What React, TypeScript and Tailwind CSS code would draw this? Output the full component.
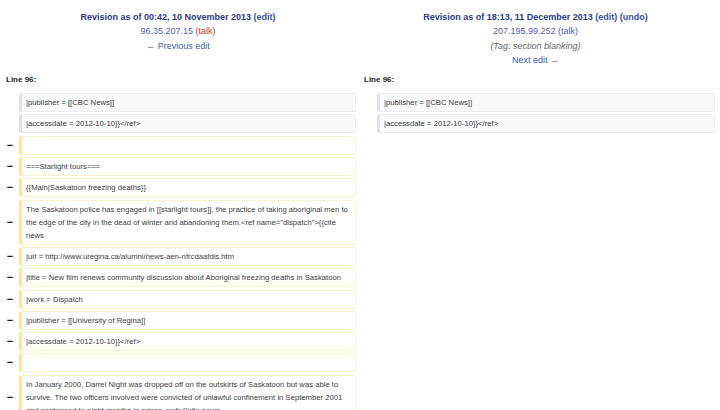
import React from "react";

type Row = { left: string | null; right?: string | null; kind: "ctx" | "del" };

const rows: Row[] = [
  { kind: "ctx", left: "|publisher = [[CBC News]]", right: "|publisher = [[CBC News]]" },
  { kind: "ctx", left: "|accessdate = 2012-10-10}}</ref>", right: "|accessdate = 2012-10-10}}</ref>" },
  { kind: "del", left: "" },
  { kind: "del", left: "===Starlight tours===" },
  { kind: "del", left: "{{Main|Saskatoon freezing deaths}}" },
  {
    kind: "del",
    left:
      'The Saskatoon police has engaged in [[starlight tours]], the practice of taking aboriginal men to the edge of the city in the dead of winter and abandoning them.<ref name="dispatch">{{cite news',
  },
  { kind: "del", left: "|url = http://www.uregina.ca/alumni/news-aen-nfrcdaafdis.htm" },
  { kind: "del", left: "|title = New film renews community discussion about Aboriginal freezing deaths in Saskatoon" },
  { kind: "del", left: "|work = Dispatch" },
  { kind: "del", left: "|publisher = [[University of Regina]]" },
  { kind: "del", left: "|accessdate = 2012-10-10}}</ref>" },
  { kind: "del", left: "" },
  {
    kind: "del",
    left:
      "In January 2000, Darrel Night was dropped off on the outskirts of Saskatoon but was able to survive. The two officers involved were convicted of unlawful confinement in September 2001 and sentenced to eight months in prison.<ref>{{cite news",
  },
];

function Box({ text, kind }: { text: string; kind: "ctx" | "del" }) {
  const cls =
    kind === "ctx"
      ? "bg-[#f8f9fa] border border-[#eaecf0] border-l-[3px] border-l-[#dfe1e5]"
      : "bg-white border border-[#fdf0cc] border-l-[3px] border-l-[#ffe49c]";
  return (
    <div className={`${cls} rounded-[2px] pl-[4px] pr-[5px] py-[2px] min-h-[19px] text-[7.7px] leading-[13px] text-[#3d3d3d] break-words`}>
      {text || "\u00a0"}
    </div>
  );
}

export default function App() {
  return (
    <div
      className="w-[720px] h-[410px] overflow-hidden bg-white"
      style={{ fontFamily: '"Liberation Sans", Arial, sans-serif' }}
    >
      <div className="grid grid-cols-[19px_337px_21px_338px] pr-[5px]">
        <div className="col-span-2 flex flex-col items-center pt-[10px] text-[9px] leading-[14.3px]">
          <div className="font-bold text-[#2a3b8a]">
            Revision as of 00:42, 10 November 2013 <span className="text-[#3a4fa0]">(edit)</span>
          </div>
          <div>
            <span className="text-[#4a63b0]">96.35.207.15</span>{" "}
            <span className="text-[#c0392b]">(talk)</span>
          </div>
          <div className="text-[#3d5bb5]">← Previous edit</div>
        </div>
        <div className="col-span-2 flex flex-col items-center pt-[10px] text-[9px] leading-[14.3px]">
          <div className="font-bold text-[#2a3b8a]">
            Revision as of 18:13, 11 December 2013 <span className="text-[#3a4fa0]">(edit)</span>{" "}
            <span className="text-[#3a4fa0]">(undo)</span>
          </div>
          <div>
            <span className="text-[#4a63b0]">207.195.99.252</span>{" "}
            <span className="text-[#4a63b0]">(talk)</span>
          </div>
          <div className="italic text-[#666]">(Tag: section blanking)</div>
          <div className="text-[#3d5bb5]">Next edit →</div>
        </div>

        <div className="col-span-2 pl-[6px] pt-[7px] pb-[7px] text-[8px] font-bold text-[#222] leading-[12px]">Line 96:</div>
        <div className="col-span-2 pl-[8px] pt-[7px] pb-[7px] text-[8px] font-bold text-[#222] leading-[12px]">Line 96:</div>

        {rows.map((r, i) => (
          <React.Fragment key={i}>
            <div className="flex items-center justify-center pb-[2.3px] pl-[1px] text-[11px] leading-[11px] font-bold text-[#222]">
              {r.kind === "del" ? "−" : ""}
            </div>
            <div className="pb-[2.3px]">
              <Box text={r.left ?? ""} kind={r.kind} />
            </div>
            <div className="pb-[2.3px]"></div>
            <div className="pb-[2.3px]">
              {r.kind === "ctx" ? <Box text={r.right ?? ""} kind="ctx" /> : null}
            </div>
          </React.Fragment>
        ))}
      </div>
    </div>
  );
}
